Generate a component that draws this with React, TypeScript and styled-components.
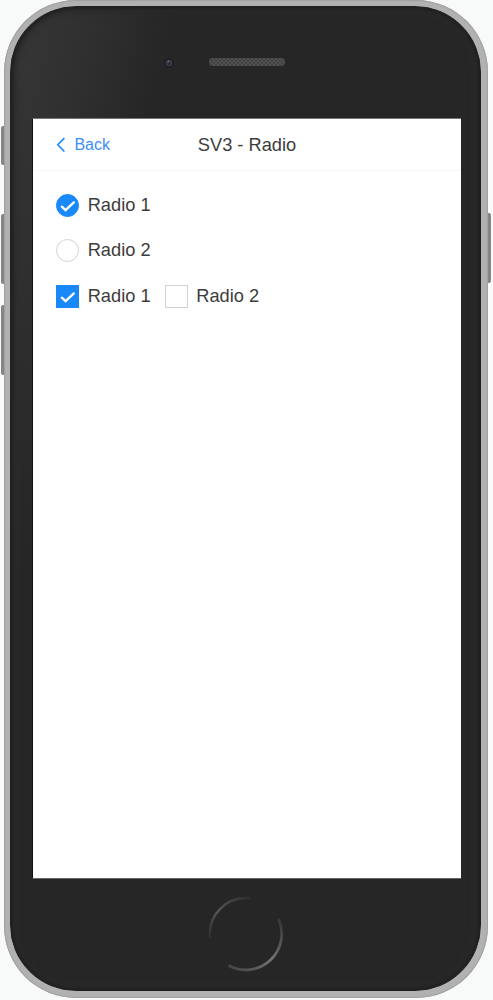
import React from 'react';
import styled, { createGlobalStyle } from 'styled-components';

const GlobalStyle = createGlobalStyle`
  html, body {
    margin: 0;
    background: #f7faf9;
    font-family: "Liberation Sans", Arial, sans-serif;
  }
  *, *::before, *::after { box-sizing: border-box; }
`;

const Stage = styled.main`
  position: relative;
  width: 493px;
  height: 1000px;
  padding: 0 0 2px 4px;
  overflow: hidden;
`;

const SideButton = styled.span<{ $side: 'left' | 'right'; $top: number; $height: number }>`
  position: absolute;
  top: ${p => p.$top}px;
  height: ${p => p.$height}px;
  width: 5px;
  ${p => (p.$side === 'left' ? 'left: 1px;' : 'left: 486px;')}
  border-radius: ${p => (p.$side === 'left' ? '2px 0 0 2px' : '0 2px 2px 0')};
  background: #858585;
`;

const Frame = styled.div`
  position: relative;
  width: 484px;
  height: 998px;
  padding: 6px 7px 6px 6px;
  border-radius: 72px;
  background: #b1b1b1;
  box-shadow: inset 0 0 1px 1px #a0a0a0;
`;

const Bezel = styled.div`
  display: flex;
  flex-direction: column;
  height: 985px;
  padding: 0 20px 0 22px;
  border: 1px solid #202020;
  border-radius: 66px;
  background: linear-gradient(105deg, #373737 0, #303030 80px, #262626 160px, #262626 100%);
  box-shadow: inset 0 0 3px 2px #202020, inset 0 0 7px 5px #2b2b2b;
`;

const TopBar = styled.div`
  display: flex;
  flex: 0 0 111px;
  align-items: flex-start;
  padding: 50px 0 0 129.5px;
`;

const Camera = styled.svg`
  width: 12px;
  height: 12px;
`;

const Speaker = styled.svg`
  width: 76px;
  height: 8px;
  margin: 1px 0 0 34px;
`;

const Screen = styled.section`
  flex: 0 0 761px;
  width: 429px;
  margin-left: -1px;
  border: 1px solid #111;
  border-width: 1px 0 1px 1px;
  border-top-color: #777;
  border-bottom-color: #666;
  background: #fff;
  color: #3d3d3d;
`;

const Header = styled.header`
  display: grid;
  grid-template-columns: 1fr auto 1fr;
  align-items: center;
  height: 52px;
  padding: 0 23px;
  border-bottom: 1px solid #f6f6f6;
`;

const BackButton = styled.button`
  display: flex;
  align-items: center;
  gap: 9.4px;
  padding: 0;
  border: 0;
  background: none;
  color: #3c8ff5;
  font: 16px/20px "Liberation Sans", Arial, sans-serif;
`;

const Title = styled.h1`
  margin: 0;
  font-size: 18.26px;
  line-height: 24px;
  font-weight: 400;
`;

const Options = styled.div`
  display: flex;
  flex-direction: column;
  gap: 22.5px;
  padding: 22.5px 23px;
`;

const OptionRow = styled.div`
  display: flex;
  gap: 14px;
`;

const Option = styled.label`
  display: flex;
  align-items: center;
  gap: 8.7px;
  height: 23px;
  font-size: 18.26px;
  line-height: 23px;
`;

const OptionText = styled.span`
  padding-bottom: 1.5px;
  line-height: 21.5px;
`;

const Mark = styled.span<{ $round?: boolean; $checked?: boolean }>`
  display: flex;
  width: 23px;
  height: 23px;
  border: 1px solid ${p => (p.$checked ? '#1989fa' : '#d2d2d2')};
  border-radius: ${p => (p.$round ? '50%' : '0')};
  background: ${p => (p.$checked ? '#1989fa' : '#fff')};
`;

const HomeArea = styled.div`
  display: flex;
  flex: 1;
  padding: 17px 0 0 174.5px;
`;

function Choice({ label, round, checked }: { label: string; round?: boolean; checked?: boolean }) {
  return (
    <Option>
      <Mark $round={round} $checked={checked}>
        {checked && (
          <svg width="21" height="21" viewBox="0 0 21 21" fill="none">
            <path d="M4.8 11.7 8.6 15.2 16.8 7.4" stroke="#fff" strokeWidth="2.3" strokeLinecap="round" />
          </svg>
        )}
      </Mark>
      <OptionText>{label}</OptionText>
    </Option>
  );
}

export default function App() {
  return (
    <>
      <GlobalStyle />
      <Stage>
        <SideButton $side="left" $top={126} $height={39} />
        <SideButton $side="left" $top={214} $height={70} />
        <SideButton $side="left" $top={305} $height={70} />
        <SideButton $side="right" $top={213} $height={70} />
        <Frame>
          <Bezel>
            <TopBar>
              <Camera viewBox="0 0 12 12">
                <circle cx="6" cy="6" r="5" fill="#202026" />
                <circle cx="6" cy="6" r="3.2" fill="#3c3c46" />
                <circle cx="6" cy="6.5" r="1.5" fill="#2a2a34" />
                <circle cx="5.5" cy="4.5" r=".9" fill="#65656d" />
              </Camera>
              <Speaker viewBox="0 0 76 8">
                <defs>
                  <pattern id="mesh" width="4" height="4" patternUnits="userSpaceOnUse">
                    <path d="M0 0h2v2H0zM2 2h2v2H2z" fill="#424242" />
                  </pattern>
                </defs>
                <rect width="76" height="8" rx="4" fill="#505050" />
                <rect width="76" height="8" rx="4" fill="url(#mesh)" />
              </Speaker>
            </TopBar>
            <Screen>
              <Header>
                <BackButton type="button">
                  <svg width="9" height="15" viewBox="0 0 9 15" fill="none">
                    <path d="M8.4 1.1 1.8 7.8 8.4 14.5" stroke="#1989fa" strokeWidth="1.6" />
                  </svg>
                  Back
                </BackButton>
                <Title>SV3 - Radio</Title>
              </Header>
              <Options>
                <Choice label="Radio 1" round checked />
                <Choice label="Radio 2" round />
                <OptionRow>
                  <Choice label="Radio 1" checked />
                  <Choice label="Radio 2" />
                </OptionRow>
              </Options>
            </Screen>
            <HomeArea>
              <svg width="76" height="76" viewBox="0 0 76 76" fill="none">
                <defs>
                  <linearGradient id="upper" x1="2" y1="50" x2="42" y2="2" gradientUnits="userSpaceOnUse">
                    <stop stopColor="#262626" />
                    <stop offset=".5" stopColor="#555" />
                    <stop offset="1" stopColor="#303030" />
                  </linearGradient>
                  <linearGradient id="lower" x1="74" y1="22" x2="22" y2="72" gradientUnits="userSpaceOnUse">
                    <stop stopColor="#333" />
                    <stop offset=".5" stopColor="#727272" />
                    <stop offset="1" stopColor="#444" />
                  </linearGradient>
                </defs>
                <path d="M2.2 43A36 36 0 0 1 42 2.3" stroke="url(#upper)" strokeWidth="2.3" />
                <path d="M70.5 23A36 36 0 0 1 20.5 69.5" stroke="url(#lower)" strokeWidth="2.8" />
              </svg>
            </HomeArea>
          </Bezel>
        </Frame>
      </Stage>
    </>
  );
}
